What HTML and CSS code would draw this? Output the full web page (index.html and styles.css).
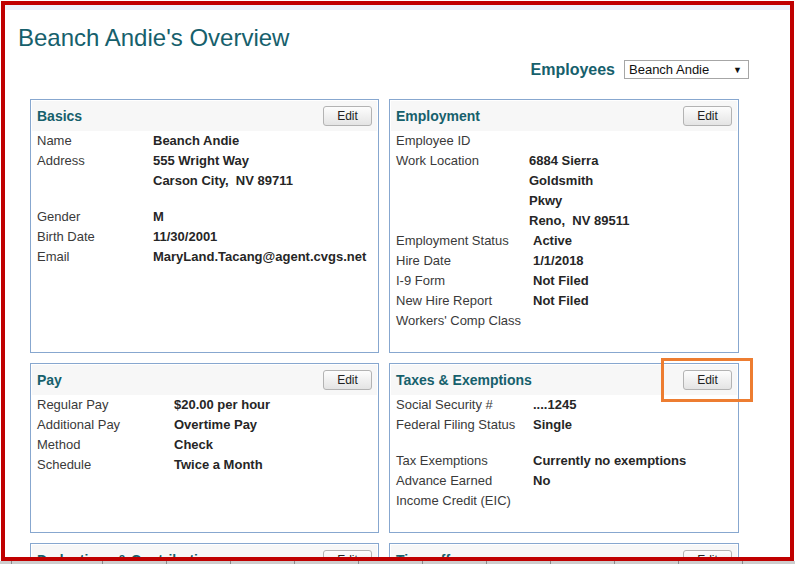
FILE: index.html
```html
<!DOCTYPE html>
<html lang="en">
<head>
    <meta charset="UTF-8">
    <title>Beanch Andie's Overview</title>
    <link rel="stylesheet" href="styles.css">
</head>
<body>
    <div class="frame">
        <div class="top-band"></div>
        <div class="page">
            <h1>Beanch Andie's Overview</h1>

            <div class="picker">
                <span class="picker-label">Employees</span>
                <div class="select-box">
                    <span>Beanch Andie</span>
                    <span class="arrow">&#9660;</span>
                </div>
            </div>

            <div class="cards">
                <!-- Basics -->
                <div class="card">
                    <div class="card-head">
                        <h2>Basics</h2>
                        <button class="btn-edit">Edit</button>
                    </div>
                    <div class="card-body lw-116">
                        <div class="row"><span class="lbl">Name</span><span class="val">Beanch Andie</span></div>
                        <div class="row"><span class="lbl">Address</span><span class="val">555 Wright Way</span></div>
                        <div class="row"><span class="lbl"></span><span class="val">Carson City,&nbsp; NV 89711</span></div>
                        <div class="spacer"></div>
                        <div class="row"><span class="lbl">Gender</span><span class="val">M</span></div>
                        <div class="row"><span class="lbl">Birth Date</span><span class="val">11/30/2001</span></div>
                        <div class="row"><span class="lbl">Email</span><span class="val">MaryLand.Tacang@agent.cvgs.net</span></div>
                    </div>
                </div>

                <!-- Employment -->
                <div class="card">
                    <div class="card-head">
                        <h2>Employment</h2>
                        <button class="btn-edit">Edit</button>
                    </div>
                    <div class="card-body">
                        <div class="lw-133">
                            <div class="row"><span class="lbl">Employee ID</span><span class="val"></span></div>
                            <div class="row"><span class="lbl">Work Location</span><span class="val">6884 Sierra</span></div>
                            <div class="row"><span class="lbl"></span><span class="val">Goldsmith</span></div>
                            <div class="row"><span class="lbl"></span><span class="val">Pkwy</span></div>
                            <div class="row"><span class="lbl"></span><span class="val">Reno,&nbsp; NV 89511</span></div>
                        </div>
                        <div class="lw-137">
                            <div class="row"><span class="lbl">Employment Status</span><span class="val">Active</span></div>
                            <div class="row"><span class="lbl">Hire Date</span><span class="val">1/1/2018</span></div>
                            <div class="row"><span class="lbl">I-9 Form</span><span class="val">Not Filed</span></div>
                            <div class="row"><span class="lbl">New Hire Report</span><span class="val">Not Filed</span></div>
                            <div class="row"><span class="lbl">Workers' Comp Class</span><span class="val"></span></div>
                        </div>
                    </div>
                </div>

                <!-- Pay -->
                <div class="card">
                    <div class="card-head">
                        <h2>Pay</h2>
                        <button class="btn-edit">Edit</button>
                    </div>
                    <div class="card-body lw-137">
                        <div class="row"><span class="lbl">Regular Pay</span><span class="val">$20.00 per hour</span></div>
                        <div class="row"><span class="lbl">Additional Pay</span><span class="val">Overtime Pay</span></div>
                        <div class="row"><span class="lbl">Method</span><span class="val">Check</span></div>
                        <div class="row"><span class="lbl">Schedule</span><span class="val">Twice a Month</span></div>
                    </div>
                </div>

                <!-- Taxes -->
                <div class="card">
                    <div class="card-head">
                        <h2>Taxes &amp; Exemptions</h2>
                        <button class="btn-edit">Edit</button>
                    </div>
                    <div class="card-body lw-137">
                        <div class="row"><span class="lbl">Social Security #</span><span class="val">....1245</span></div>
                        <div class="row"><span class="lbl">Federal Filing Status</span><span class="val">Single</span></div>
                        <div class="spacer"></div>
                        <div class="row"><span class="lbl">Tax Exemptions</span><span class="val">Currently no exemptions</span></div>
                        <div class="row"><span class="lbl">Advance Earned</span><span class="val">No</span></div>
                        <div class="row"><span class="lbl">Income Credit (EIC)</span><span class="val"></span></div>
                    </div>
                </div>

                <!-- Deductions -->
                <div class="card">
                    <div class="card-head">
                        <h2>Deductions &amp; Contributions</h2>
                        <button class="btn-edit">Edit</button>
                    </div>
                    <div class="card-body lw-137">
                        <div class="row"><span class="lbl">Deductions</span><span class="val">None</span></div>
                    </div>
                </div>

                <!-- Time off -->
                <div class="card">
                    <div class="card-head">
                        <h2>Time off</h2>
                        <button class="btn-edit">Edit</button>
                    </div>
                    <div class="card-body lw-137">
                        <div class="row"><span class="lbl">Sick Leave</span><span class="val">None</span></div>
                    </div>
                </div>
            </div>
        </div>

        <!-- callout round the Taxes edit button -->
        <div class="callout"></div>
    </div>
    <div class="bottom-strip"></div>
</body>
</html>
```

FILE: styles.css
```css
* {
    margin: 0;
    padding: 0;
    box-sizing: border-box;
}

body {
    font-family: 'Liberation Sans', Arial, sans-serif;
    background: #fff;
    color: #333;
    width: 795px;
    height: 564px;
    overflow: hidden;
    padding-top: 1px;
}

.frame {
    position: relative;
    margin-left: 1px;
    width: 793px;
    height: 560px;
    border: 4px solid #c00000;
    background: #fff;
    overflow: hidden;
}

.top-band {
    height: 5px;
    background: #edf2fa;
}

.page {
    padding: 14px 41px 0 13px;
}

h1 {
    font-size: 24px;
    line-height: 28px;
    font-weight: normal;
    color: #16606c;
}

.picker {
    display: flex;
    justify-content: flex-end;
    align-items: center;
    gap: 9px;
    margin-top: 8px;
}

.picker-label {
    font-size: 16px;
    line-height: 19px;
    font-weight: bold;
    color: #16606c;
}

.select-box {
    display: flex;
    align-items: center;
    justify-content: space-between;
    width: 125px;
    height: 19px;
    padding: 0 6px 0 4px;
    border: 1px solid #a6a6a6;
    background: #fff;
    font-size: 13px;
    color: #111;
}

.select-box .arrow {
    font-size: 9px;
    color: #111;
}

.cards {
    display: grid;
    grid-template-columns: 349px 350px;
    column-gap: 10px;
    row-gap: 10px;
    margin: 20px 0 0 12px;
}

.card {
    border: 1px solid #87a7cf;
    padding: 1px;
    background: #fff;
}

.card-head {
    display: flex;
    align-items: center;
    justify-content: space-between;
    height: 30px;
    padding: 0 5px;
    background: #f7f7f7;
}

.card-head h2 {
    font-size: 14px;
    font-weight: bold;
    color: #16606c;
}

.btn-edit {
    width: 49px;
    height: 20px;
    border: 1px solid #b3b3b3;
    border-radius: 3px;
    background: linear-gradient(#fdfdfd, #e4e4e4);
    font-family: 'Liberation Sans', Arial, sans-serif;
    font-size: 12px;
    color: #222;
}

.card-body {
    padding: 0 5px 20px 5px;
    font-size: 13px;
    line-height: 20px;
}

.row {
    display: flex;
    white-space: nowrap;
}

.lbl {
    flex-shrink: 0;
    color: #3a3a3a;
}

.val {
    font-weight: bold;
    color: #262626;
}

.lw-116 .lbl { width: 116px; }
.lw-133 .lbl { width: 133px; }
.lw-137 .lbl { width: 137px; }

.spacer {
    height: 16px;
}

.callout {
    position: absolute;
    left: 656px;
    top: 353px;
    width: 92px;
    height: 44px;
    border: 3px solid #ed7d31;
}

.bottom-strip {
    height: 3px;
    background-color: #cdcdcd;
    background-image: repeating-linear-gradient(90deg, transparent 0 63px, #8a8a8a 63px 64px);
    background-position: 39px 0;
}
```
